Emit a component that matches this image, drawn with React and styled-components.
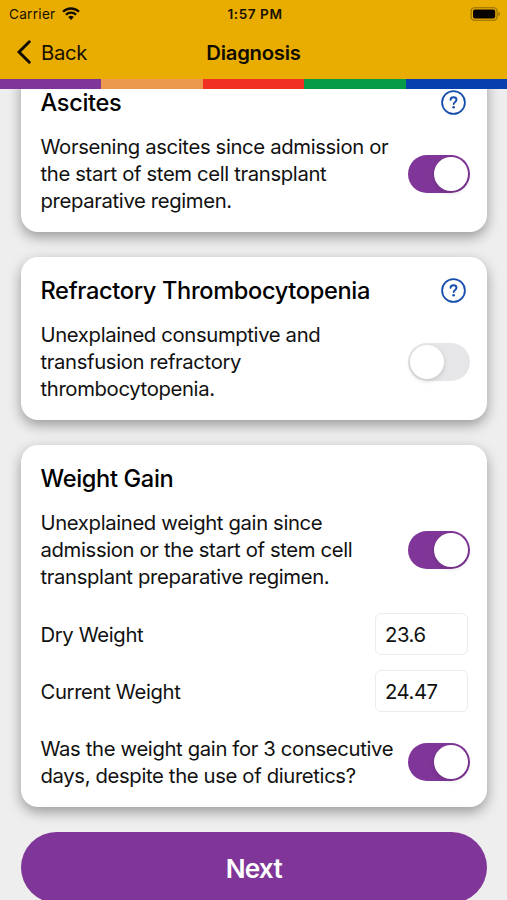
import React, { useState } from 'react';
import styled, { createGlobalStyle } from 'styled-components';

const GlobalStyle = createGlobalStyle`
  * {
    box-sizing: border-box;
  }

  body {
    margin: 0;
    background-color: #eee;
    color: #111;
    font-family: Inter, 'Liberation Sans', sans-serif;
    overflow: hidden;
  }
`;

const Screen = styled.div`
  display: flex;
  flex-direction: column;
  height: 900px;
  overflow: hidden;
`;

const Header = styled.header`
  flex: none;
  background-color: #e9ac00;
`;

const StatusBar = styled.div`
  display: grid;
  grid-template-columns: 1fr auto 1fr;
  align-items: center;
  height: 27px;
  padding: 0 6px 0 9px;
  color: #171100;
  font-size: 13.6px;
`;

const Carrier = styled.div`
  display: flex;
  align-items: center;
  gap: 6px;
  letter-spacing: 0.28px;
`;

const Clock = styled.div`
  font-weight: 600;
  font-size: 13.6px;
  letter-spacing: 0.55px;
`;

const Battery = styled.svg`
  justify-self: end;
`;

const NavBar = styled.div`
  display: grid;
  grid-template-columns: 1fr auto 1fr;
  align-items: center;
  height: 52px;
  padding: 0 16px 2px;
`;

const BackButton = styled.button`
  display: flex;
  align-items: center;
  gap: 9px;
  padding: 0;
  border: 0;
  background: none;
  color: #171100;
  font-family: inherit;
  font-size: 20.3px;
  letter-spacing: -0.3px;
`;

const NavTitle = styled.h1`
  margin: 0;
  color: #100c00;
  font-size: 20.3px;
  font-weight: 600;
  letter-spacing: -0.25px;
`;

const Stripes = styled.div`
  display: flex;
  height: 9.5px;
`;

const Stripe = styled.div`
  flex: 1;
  background-color: ${({ color }) => color};
`;

const Content = styled.main`
  display: flex;
  flex: 1;
  flex-direction: column;
  min-height: 0;
  padding: 0 20px 0 20.5px;
  overflow: hidden;
`;

const Card = styled.section`
  flex: none;
  margin-top: ${({ $scrolled }) => ($scrolled ? '-20px' : '24.5px')};
  padding: 19px 17px 18px 20px;
  border-radius: 17px;
  background-color: #fff;
  box-shadow: 0 5px 13px rgba(0, 0, 0, 0.36);
`;

const CardHeader = styled.div`
  display: flex;
  align-items: center;
  justify-content: space-between;
  height: 30px;
  margin-bottom: 15.5px;
  padding-right: 4.5px;
`;

const CardTitle = styled.h2`
  margin: 0;
  color: #000;
  font-size: 23.6px;
  font-weight: 500;
  letter-spacing: -0.34px;
  white-space: nowrap;
`;

const HelpButton = styled.button`
  display: flex;
  padding: 0;
  border: 0;
  background: none;
`;

const Row = styled.div`
  display: flex;
  align-items: center;
  justify-content: space-between;
  margin-top: ${({ $gap }) => $gap || 0}px;
`;

const Text = styled.p`
  margin: 0;
  font-size: 20.3px;
  letter-spacing: -0.36px;
  line-height: 27px;
  white-space: pre;
`;

const Switch = styled.button`
  display: flex;
  flex: none;
  justify-content: ${({ $on }) => ($on ? 'flex-end' : 'flex-start')};
  width: 62.5px;
  height: 38px;
  padding: 2px;
  border: 0;
  border-radius: 19px;
  background-color: ${({ $on }) => ($on ? '#803698' : '#e6e6e8')};
`;

const Knob = styled.span`
  width: 34px;
  height: 34px;
  border-radius: 50%;
  background-color: #fff;
  box-shadow: 0 2px 5px rgba(0, 0, 0, 0.14);
`;

const NumberInput = styled.input`
  width: 93px;
  height: 42px;
  margin-right: 2px;
  padding: 0 9px;
  border: 1px solid #ececec;
  border-radius: 6px;
  background-color: #fff;
  color: #111;
  font-family: inherit;
  font-size: 20.3px;
  letter-spacing: -0.45px;
  outline: none;
`;

const NextButton = styled.button`
  flex: none;
  height: 71px;
  margin-top: 24.5px;
  padding-top: 3px;
  border: 0;
  border-radius: 36px;
  background-color: #803698;
  color: #fff;
  font-family: inherit;
  font-size: 26.2px;
  font-weight: 600;
  letter-spacing: -0.8px;
`;

const STRIPES = ['#803698', '#ec984d', '#f13024', '#079b48', '#0540ae'];

function WifiIcon() {
  return (
    <svg width="18" height="13" viewBox="0 0 18 13" fill="none" stroke="#120d00" strokeWidth="2.3">
      <path d="M1 4.8a11.4 11.4 0 0 1 16 0" />
      <path d="M3.9 7.8a7.3 7.3 0 0 1 10.2 0" />
      <path d="M9 13 6.2 10.1a4 4 0 0 1 5.6 0z" fill="#120d00" stroke="none" />
    </svg>
  );
}

function BatteryIcon() {
  return (
    <Battery width="31" height="14" viewBox="0 0 31 14">
      <rect x="1.1" y="0.7" width="26" height="12.6" rx="3.6" fill="none" stroke="#8f6b08" strokeWidth="1.1" />
      <rect x="3" y="2.6" width="22.2" height="8.8" rx="1.9" fill="#080500" />
      <path d="M28.5 4.8c2 .8 2 3.6 0 4.4z" fill="#8f6b08" />
    </Battery>
  );
}

function BackIcon() {
  return (
    <svg width="16" height="24" viewBox="0 0 16 24" fill="none" stroke="#120d00" strokeWidth="2.9">
      <path d="M13.3 1.8 3 12l10.3 10.2" strokeLinecap="round" strokeLinejoin="miter" />
    </svg>
  );
}

function HelpIcon() {
  return (
    <svg width="25" height="25" viewBox="0 0 25 25" fill="none" stroke="#174fad">
      <circle cx="12.5" cy="12.5" r="11.4" strokeWidth="1.8" />
      <path
        d="M9.5 9.9c.1-1.7 1.3-2.6 3-2.6s3 1 3 2.5c0 2-2.8 2.2-2.8 4.3"
        strokeWidth="1.9"
        strokeLinecap="round"
      />
      <circle cx="12.6" cy="17.2" r="1.3" fill="#174fad" stroke="none" />
    </svg>
  );
}

function Toggle({ label, defaultOn = false }) {
  const [on, setOn] = useState(defaultOn);

  return (
    <Switch type="button" role="switch" aria-checked={on} aria-label={label} $on={on} onClick={() => setOn(!on)}>
      <Knob />
    </Switch>
  );
}

function Criterion({ title, text, help, defaultOn, scrolled, children }) {
  return (
    <Card $scrolled={scrolled}>
      <CardHeader>
        <CardTitle>{title}</CardTitle>
        {help && (
          <HelpButton type="button" aria-label="Help">
            <HelpIcon />
          </HelpButton>
        )}
      </CardHeader>
      <Row>
        <Text>{text}</Text>
        <Toggle label={title} defaultOn={defaultOn} />
      </Row>
      {children}
    </Card>
  );
}

function App() {
  return (
    <Screen>
      <GlobalStyle />
      <Header>
        <StatusBar>
          <Carrier>
            Carrier
            <WifiIcon />
          </Carrier>
          <Clock>1:57 PM</Clock>
          <BatteryIcon />
        </StatusBar>
        <NavBar>
          <BackButton type="button">
            <BackIcon />
            Back
          </BackButton>
          <NavTitle>Diagnosis</NavTitle>
        </NavBar>
        <Stripes>
          {STRIPES.map(color => (
            <Stripe key={color} color={color} />
          ))}
        </Stripes>
      </Header>
      <Content>
        <Criterion
          title="Ascites"
          text={'Worsening ascites since admission or\nthe start of stem cell transplant\npreparative regimen.'}
          help
          defaultOn
          scrolled
        />
        <Criterion
          title="Refractory Thrombocytopenia"
          text={'Unexplained consumptive and\ntransfusion refractory\nthrombocytopenia.'}
          help
        />
        <Criterion
          title="Weight Gain"
          text={'Unexplained weight gain since\nadmission or the start of stem cell\ntransplant preparative regimen.'}
          defaultOn
        >
          <Row $gap={23}>
            <Text>Dry Weight</Text>
            <NumberInput aria-label="Dry Weight" defaultValue="23.6" />
          </Row>
          <Row $gap={15}>
            <Text>Current Weight</Text>
            <NumberInput aria-label="Current Weight" defaultValue="24.47" />
          </Row>
          <Row $gap={23}>
            <Text>{'Was the weight gain for 3 consecutive\ndays, despite the use of diuretics?'}</Text>
            <Toggle label="Weight gain for 3 consecutive days" defaultOn />
          </Row>
        </Criterion>
        <NextButton type="button">Next</NextButton>
      </Content>
    </Screen>
  );
}

export default App;
